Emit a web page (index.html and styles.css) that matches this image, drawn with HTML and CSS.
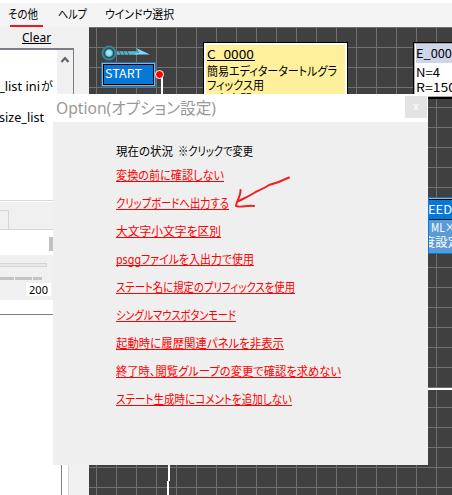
FILE: index.html
```html
<!DOCTYPE html>
<html lang="ja">
<head>
<meta charset="utf-8">
<title>Option</title>
<link rel="stylesheet" href="styles.css">
</head>
<body>
<nav class="menu">
  <svg width="452" height="27"><g class="ui"><text x="8" y="19" textLength="30" lengthAdjust="spacingAndGlyphs">その他</text><text x="58" y="19" textLength="29" lengthAdjust="spacingAndGlyphs">ヘルプ</text><text x="105" y="19" textLength="69" lengthAdjust="spacingAndGlyphs">ウインドウ選択</text></g><path d="M10 26H43" stroke="#f01520" stroke-width="2"/></svg>
</nav>
<main class="work">
  <aside class="side">
    <div class="clear"><u>Clear</u></div>
    <div class="log">
      <div class="log-text"><svg width="57" height="90"><g class="latin"><text x="-1" y="41" textLength="41" lengthAdjust="spacingAndGlyphs">_list ini</text><text x="41" y="41" textLength="11" class="jp">が</text><text x="-1" y="72" textLength="45" lengthAdjust="spacingAndGlyphs">size_list</text></g></svg></div>
      <div class="scroll"><svg width="16" height="20"><path d="M4.5 12L8 8l3.500 4" fill="none" stroke="#606060" stroke-width="2"/></svg></div>
    </div>
    <div class="tabs"><div class="tab"></div></div>
    <div class="field"><div class="thumb"></div></div>
    <div class="slider"><div class="track"></div><div class="ticks"><i></i><i></i><i></i></div><div class="value">200</div></div>
    <div class="list"></div>
  </aside>
  <section class="canvas">
    <svg class="wires" width="363" height="468" viewBox="89 27 363 468">
      <path d="M162 77V100M169 460V481M168 481V495M420 389H452" stroke="#fff" stroke-width="2" fill="none"/>
      <circle cx="109" cy="53" r="6.500" fill="#285460" stroke="#3b8194" stroke-width="2"/>
      <circle cx="109" cy="53" r="3.500" fill="#9be7f5" stroke="#59b3c7"/>
      <path d="M117 53H138" stroke="#59b9cf" stroke-width="3.500"/><path d="M119 51l2 4m2-4l2 4m2-4l2 4" stroke="#30636f"/>
      <path d="M136 48l14 6.500h-16l5-2z" fill="#76def5"/>
    </svg>
    <div class="node start"><svg width="50" height="20"><text x="1" y="13" textLength="37" lengthAdjust="spacingAndGlyphs">START</text></svg></div>
    <div class="dot"></div>
    <div class="node comment"><svg width="140" height="70"><text x="1" y="14" textLength="47" lengthAdjust="spacingAndGlyphs">C_0000</text><path d="M1 15.500H49" stroke="#000"/><text x="1" y="31" textLength="130" lengthAdjust="spacingAndGlyphs">簡易エディタータートルグラ</text><text x="1" y="45" textLength="57" lengthAdjust="spacingAndGlyphs">フィックス用</text><text x="10" y="59">本中間</text></svg></div>
    <div class="node embed"><svg width="60" height="54"><path d="M0 0H60V19H0Z" fill="#cfd5e8"/><text x="0" y="14" textLength="43" lengthAdjust="spacingAndGlyphs">E_0001</text><text x="0" y="33" textLength="24" lengthAdjust="spacingAndGlyphs">N=4</text><text x="0" y="48" textLength="40" lengthAdjust="spacingAndGlyphs">R=150</text></svg></div>
    <div class="node speed"><svg width="52" height="53"><path d="M0 19H52V53H0Z" fill="#5b9bd5"/><path d="M0 19.500H52" stroke="#101820"/><text x="-1" y="14" textLength="24" lengthAdjust="spacingAndGlyphs">EED</text><text x="2" y="32" textLength="24" lengthAdjust="spacingAndGlyphs">ML×</text><text x="-6" y="47" textLength="37" lengthAdjust="spacingAndGlyphs">度設定</text></svg></div>
  </section>
</main>
<section class="dialog">
  <header><svg width="352" height="28"><text x="3" y="20" textLength="160" lengthAdjust="spacingAndGlyphs">Option(オプション設定)</text></svg><div class="close">x</div></header>
  <ul>
    <li class="head"><svg width="137" height="15"><text y="14" textLength="57" lengthAdjust="spacingAndGlyphs">現在の状況</text><text x="62" y="14" textLength="75" lengthAdjust="spacingAndGlyphs">※クリックで変更</text></svg></li>
    <li><svg width="108" height="15"><text y="14" textLength="108" lengthAdjust="spacingAndGlyphs">変換の前に確認しない</text></svg></li>
    <li><svg width="113" height="15"><text y="14" textLength="113" lengthAdjust="spacingAndGlyphs">クリップボードへ出力する</text></svg></li>
    <li><svg width="105" height="15"><text y="14" textLength="105" lengthAdjust="spacingAndGlyphs">大文字小文字を区別</text></svg></li>
    <li><svg width="138" height="15"><text class="latin" y="14" textLength="25" lengthAdjust="spacingAndGlyphs">psgg</text><text x="25" y="14" textLength="113" lengthAdjust="spacingAndGlyphs">ファイルを入出力で使用</text></svg></li>
    <li><svg width="179" height="15"><text y="14" textLength="179" lengthAdjust="spacingAndGlyphs">ステート名に規定のプリフィックスを使用</text></svg></li>
    <li><svg width="120" height="15"><text y="14" textLength="120" lengthAdjust="spacingAndGlyphs">シングルマウスボタンモード</text></svg></li>
    <li><svg width="168" height="15"><text y="14" textLength="168" lengthAdjust="spacingAndGlyphs">起動時に履歴関連パネルを非表示</text></svg></li>
    <li><svg width="225" height="15"><text y="14" textLength="225" lengthAdjust="spacingAndGlyphs">終了時、閲覧グループの変更で確認を求めない</text></svg></li>
    <li><svg width="176" height="15"><text y="14" textLength="176" lengthAdjust="spacingAndGlyphs">ステート生成時にコメントを追加しない</text></svg></li>
  </ul>
  <svg class="arrow" width="60" height="36" viewBox="233 174 60 36"><path d="M289 177.500C280 182 273 184 269 185C262 190 258 190 254 193C248 197 242 199 237 202M240.500 190C241 196 236 202 236 206C241 208 247 205 254 206" fill="none" stroke="#ee2222" stroke-width="2" stroke-linecap="round" stroke-linejoin="round"/></svg>
</section>
</body>
</html>
```
FILE: styles.css
```css
* { box-sizing: border-box; }
body { margin: 0; width: 452px; height: 495px; overflow: hidden; position: relative; background: #f0f0f0; font-family: "Noto Sans CJK JP", sans-serif; }
svg { display: block; }
text { font: 12px "Noto Sans CJK JP", sans-serif; font-feature-settings: "palt"; }
.menu { height: 27px; border-top: 3px solid #fff; background: #f4f4f4; }
.menu svg { margin-top: -3px; }
.latin text, text.latin, .clear, .value { font-family: "Noto Sans", "Noto Sans CJK JP", sans-serif; font-size: 12px; }
.work { display: flex; height: 468px; }
.side { width: 89px; display: flex; flex-direction: column; }
.clear { height: 21px; padding-left: 22px; line-height: 22px; }
.log { height: 153px; width: 74px; display: flex; border: 1px solid #7a7f87; border-width: 2px 1px 1px 0; border-bottom-color: #d8d8d8; background: #fff; }
.log-text { width: 57px; }
.scroll { width: 16px; background: #f0f0f0; }
.tabs { height: 29px; padding-top: 8px; border-bottom: 1px solid #d5d5d5; border-top: 1px solid #fff; }
.tab { width: 9px; height: 19px; border: 1px solid #d5d5d5; border-width: 1px 1px 0 0; }
.field { height: 25px; background: #fff; padding: 7px 0 0 49px; }
.thumb { width: 10px; height: 14px; background: #c1c1c1; }
.slider { height: 45px; padding-top: 8px; }
.track { width: 47px; height: 4px; border: 1px solid #d2d5d5; border-left: 0; background: #e7eaea; }
.ticks { display: flex; gap: 1px; margin-top: 10px; }
.ticks i { width: 14px; height: 3px; background: #c3c3c3; }
.ticks i:nth-child(2) { width: 17px; }
.ticks i:nth-child(3) { width: 9px; }
.value { width: 25px; height: 13px; margin: 3px 0 0 26px; background: #fff; line-height: 13px; font-size: 11px; text-align: center; }
.list { flex: 1; width: 69px; background: linear-gradient(#7d828a, #7d828a) 0 14px / 62px 1px no-repeat, linear-gradient(#7d828a, #7d828a) 61px 14px / 1px 100% no-repeat, #fff; border-right: 1px solid #d5d5d5; }
.canvas { width: 363px; position: relative; overflow: hidden; background: repeating-linear-gradient(90deg, transparent 0 7px, #707070 7px 8px, transparent 8px 20px), repeating-linear-gradient(#707070 0 1px, transparent 1px 20px), #404040; }
.wires { position: absolute; }
.node { position: absolute; }
.node svg { overflow: hidden; }
.start { left: 12px; top: 35px; width: 55px; height: 25px; border: 1px solid #0878d8; padding: 2px; background: #0878d8; box-shadow: inset 0 0 0 1px #aaa, inset 0 0 0 2px #000; }
.start text, .speed text { fill: #fff; }
.dot { position: absolute; left: 66px; top: 43px; width: 9px; height: 9px; border: 1px solid #fff; border-radius: 50%; background: #f00; }
.comment { left: 114px; top: 15px; width: 145px; height: 90px; border: 1px solid #000; padding: 2px; background: #fff09b; box-shadow: inset 0 0 0 2px #fff; }
.embed { left: 324px; top: 15px; width: 70px; height: 57px; border: 1px solid #000; border-bottom-width: 2px; padding: 1px 2px; background: #fff; box-shadow: inset 0 0 0 1px #aaa; }
.speed { left: 339px; top: 170px; width: 80px; height: 57px; border: 1px solid #0878d8; padding: 2px 0; background: #0878d8; box-shadow: inset 0 1px #aaa, inset 0 2px #000, inset 0 -1px #aaa; }
.dialog { position: absolute; left: 53px; top: 94px; width: 375px; height: 371px; background: #efefef; }
.dialog header { height: 28px; display: flex; background: #fff; }
.dialog header text { font-size: 16px; fill: #999; font-family: "Noto Sans", "Noto Sans CJK JP", sans-serif; }
.close { width: 22px; height: 22px; margin-top: 2px; background: #e3e3e3; color: #f8f8f8; font: bold 10px/21px "Noto Sans", sans-serif; text-align: center; }
.dialog ul { margin: 0; padding: 20px 0 0 63px; list-style: none; display: flex; flex-direction: column; gap: 12px; align-items: flex-start; }
.dialog li { height: 16px; border-bottom: 1px solid #f00; }
.dialog li text { fill: #f00; }
.dialog li.head { height: 12px; border: 0; }
.dialog li.head text { fill: #000; }
.dialog li svg { overflow: visible; }
.arrow { position: absolute; left: 180px; top: 80px; }
```
